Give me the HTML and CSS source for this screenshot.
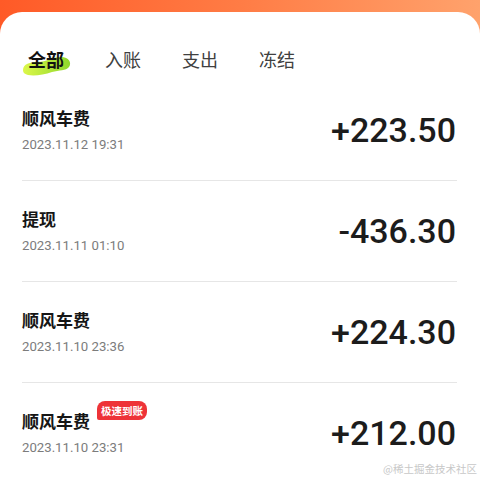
FILE: index.html
```html
<!DOCTYPE html>
<html lang="zh-CN">

<head>
    <meta charset="UTF-8">
    <meta name="viewport" content="width=device-width, initial-scale=1.0">
    <title>账单明细</title>
    <link rel="stylesheet" href="styles.css">
</head>

<body>
    <div class="top-band"></div>

    <div class="card">
        <ul class="tabs">
            <li class="tab active">
                <svg class="tab-mark" width="50" height="20" viewBox="0 0 50 20">
                    <defs>
                        <linearGradient id="lime" x1="0" y1="0" x2="1" y2="0">
                            <stop offset="0" stop-color="#dcf74a" />
                            <stop offset="1" stop-color="#8fd82c" />
                        </linearGradient>
                    </defs>
                    <path d="M1 14 C1 8 8 6 16 6 C24 6 30 1 39 1 C47 1 50 7 47 11 C44 15 37 14 30 16 C22 19 12 20 6 19 C2 18 1 16 1 14 Z" fill="url(#lime)" />
                </svg>
                <span>全部</span>
            </li>
            <li class="tab">入账</li>
            <li class="tab">支出</li>
            <li class="tab">冻结</li>
        </ul>

        <div class="list">
            <div class="row">
                <div class="info">
                    <div class="title">顺风车费</div>
                    <div class="date">2023.11.12 19:31</div>
                </div>
                <div class="amount">+223.50</div>
            </div>
            <div class="row">
                <div class="info">
                    <div class="title">提现</div>
                    <div class="date">2023.11.11 01:10</div>
                </div>
                <div class="amount">-436.30</div>
            </div>
            <div class="row">
                <div class="info">
                    <div class="title">顺风车费</div>
                    <div class="date">2023.11.10 23:36</div>
                </div>
                <div class="amount">+224.30</div>
            </div>
            <div class="row">
                <div class="info">
                    <div class="title">顺风车费<span class="badge">极速到账</span></div>
                    <div class="date">2023.11.10 23:31</div>
                </div>
                <div class="amount">+212.00</div>
            </div>
        </div>
    </div>

    <div class="watermark">@稀土掘金技术社区</div>
</body>

</html>
```

FILE: styles.css
```css
html,
body {
    margin: 0;
    padding: 0;
}

body {
    width: 480px;
    height: 480px;
    overflow: hidden;
    position: relative;
    background: linear-gradient(90deg, #ff5a27 0%, #ff7c45 50%, #ffa26c 100%);
    font-family: "Noto Sans CJK SC", "Noto Sans", sans-serif;
}

.top-band {
    height: 12px;
}

.card {
    background-color: #fff;
    border-radius: 22px 22px 0 0;
    height: 468px;
}

.tabs {
    list-style: none;
    margin: 0;
    padding: 35px 0 9px 28px;
    display: flex;
    gap: 41px;
}

.tab {
    position: relative;
    font-size: 18px;
    line-height: 24px;
    color: #404040;
}

.tab.active {
    color: #111;
    font-weight: 700;
}

.tab.active span {
    position: relative;
}

.tab-mark {
    position: absolute;
    left: -6px;
    top: 9px;
}

.list {
    margin: 0 23px 0 22px;
}

.row {
    height: 100px;
    display: flex;
    align-items: center;
    justify-content: space-between;
    border-bottom: 1px solid #e6e6e6;
}

.info {
    display: flex;
    flex-direction: column;
    gap: 6px;
}

.title {
    display: flex;
    align-items: flex-start;
    font-size: 17px;
    line-height: 24px;
    font-weight: 700;
    color: #161616;
}

.badge {
    margin: -8px 0 0 7px;
    height: 19px;
    padding: 0 4px;
    background-color: #ee3338;
    color: #fff;
    font-size: 10.5px;
    line-height: 19px;
    font-weight: 700;
    border-radius: 8px 8px 8px 2px;
}

.date {
    font-family: Roboto, "Noto Sans CJK SC", sans-serif;
    font-size: 13.2px;
    line-height: 18px;
    color: #7c7c7c;
}

.amount {
    font-family: Roboto, "Liberation Sans", sans-serif;
    font-size: 34px;
    font-weight: 500;
    color: #1c1c1c;
    padding-right: 1px;
}

.watermark {
    position: absolute;
    right: 3px;
    bottom: 3px;
    font-size: 10.5px;
    line-height: 16px;
    color: #c8c8c8;
    font-family: "Noto Sans CJK SC", sans-serif;
}
```
